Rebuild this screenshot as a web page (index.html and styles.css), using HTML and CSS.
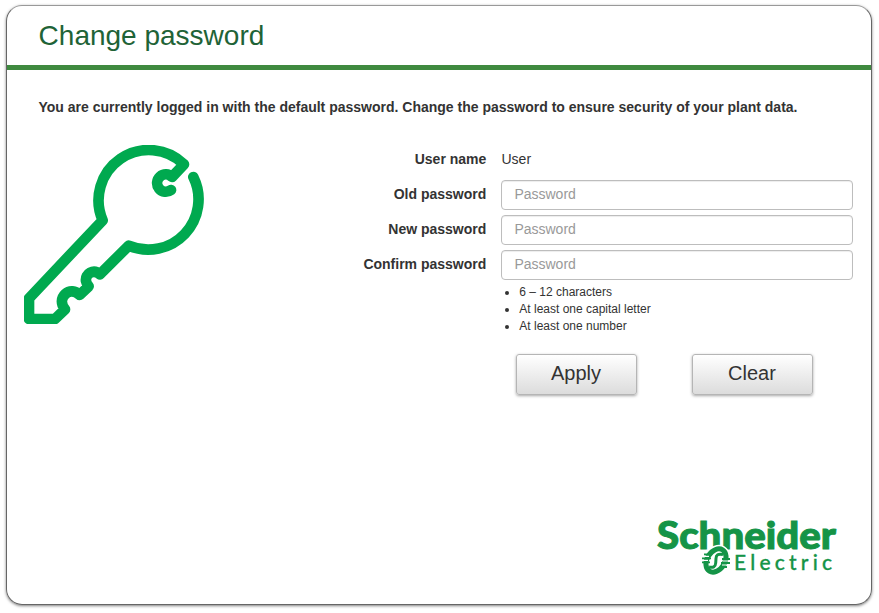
FILE: index.html
```html
<!DOCTYPE html>
<html lang="en">
<head>
<meta charset="utf-8">
<title>Change password</title>
<link rel="stylesheet" href="styles.css">
</head>
<body>
<main class="card">
  <header class="header"><h1>Change password</h1></header>
  <p class="notice">You are currently logged in with the default password. Change the password to ensure security of your plant data.</p>
  <div class="content">
    <svg class="key" viewBox="42 30 540 537" fill="none" stroke="#00a94f" stroke-width="32" stroke-linecap="round" stroke-linejoin="round" aria-hidden="true">
      <path d="M550 126A151 151 0 0 1 356 332L270 418C250 401 225 416 228 438Q230 448 236 454L209 480C196 467 179 465 166 477C153 489 152 507 165 523L135 552H57V490L278 256A151 151 0 0 1 522 88L486 126A26 26 0 1 0 483 165"/>
    </svg>
    <form class="form">
      <div class="row"><span class="label">User name</span><span class="value">User</span></div>
      <div class="row"><label class="label" for="old">Old password</label><input id="old" type="password" placeholder="Password"></div>
      <div class="row"><label class="label" for="new">New password</label><input id="new" type="password" placeholder="Password"></div>
      <div class="row"><label class="label" for="confirm">Confirm password</label><input id="confirm" type="password" placeholder="Password"></div>
      <ul class="rules">
        <li>6 – 12 characters</li>
        <li>At least one capital letter</li>
        <li>At least one number</li>
      </ul>
      <div class="actions"><button type="button">Apply</button><button type="button">Clear</button></div>
    </form>
  </div>
  <footer class="footer">
    <svg class="logo" viewBox="0 0 205 75" role="img" aria-label="Schneider Electric">
      <text class="brand" x="12" y="38.6" textLength="179" lengthAdjust="spacingAndGlyphs">Schneider</text>
      <text class="sub" x="89" y="59.5" textLength="98">Electric</text>
      <g transform="rotate(32 71 50.5)">
        <ellipse class="halo" cx="71" cy="50.5" rx="11.5" ry="15"/>
        <ellipse class="emblem" cx="71" cy="50.5" rx="11.5" ry="15"/>
        <ellipse class="inner" cx="71" cy="50.5" rx="6.3" ry="10"/>
      </g>
      <path class="cut" d="M57 46.4H64M56 50.4H63M78 51H86M77 55H85"/>
      <path class="bars" d="M59 44.4H67M57 48.4H66M57 52.4H65M77 49H85M76 53H85M75 57H82"/>
      <path class="ess" d="M78 44.5C73 43.5 71 45 71 48.5L70.7 53C70.5 57 68 58 64 57"/>
    </svg>
  </footer>
</main>
</body>
</html>
```
FILE: styles.css
```css
* { box-sizing: border-box; }
body {
  margin: 0;
  padding: 5px 7px 8px 6px;
  background: #fff;
  color: #333;
  font: 14px/20px "Liberation Sans", Arial, sans-serif;
}
.card {
  height: 600px;
  display: flex;
  flex-direction: column;
  border: 1px solid #666;
  border-top-color: #999;
  border-radius: 16px;
  box-shadow: 0 1px 3px rgba(0, 0, 0, .5);
}
.header {
  height: 64px;
  padding: 13px 31.6px 0;
  border-bottom: 5px solid #3f8a3f;
}
h1 {
  margin: 0;
  color: #1f6337;
  font-size: 28px;
  font-weight: 400;
  line-height: 34px;
}
.notice {
  margin: 27px 31.5px 0;
  font-weight: 700;
  white-space: nowrap;
}
.content {
  display: flex;
  padding: 28px 18px 0 17px;
}
.key {
  width: 180px;
  height: 179px;
  flex: none;
}
.form { flex: 1; }
.row {
  display: grid;
  grid-template-columns: 282.3px 352px;
  column-gap: 14.7px;
  height: 30px;
  margin-bottom: 5px;
  line-height: 28px;
}
.label {
  text-align: right;
  font-weight: 700;
}
.value { padding-left: .5px; }
input {
  width: 100%;
  height: 30px;
  padding: 3px 12px 5px 12.4px;
  border: 1px solid #bdbdbd;
  border-radius: 4px;
  background: #fff;
  color: #555;
  font: inherit;
  line-height: 20px;
  box-shadow: inset 0 1px 1px rgba(0, 0, 0, .075);
}
input::placeholder { color: #999; opacity: 1; }
.rules {
  margin: -1px 0 0 297px;
  padding-left: 18.3px;
  font-size: 12px;
  line-height: 17px;
}
.actions {
  display: flex;
  gap: 55px;
  margin: 19px 0 0 311.5px;
}
button {
  width: 121px;
  height: 41px;
  padding: 0 0 3px;
  border: 1px solid #b5b5b5;
  border-radius: 3px;
  background: linear-gradient(#fff, #dcdcdc);
  color: #333;
  font: 20px/24px "Liberation Sans", Arial, sans-serif;
  box-shadow: 0 1px 3px rgba(0, 0, 0, .35);
}
.footer {
  display: flex;
  justify-content: flex-end;
  margin-top: auto;
  padding: 0 21px 19px 0;
}
.logo {
  width: 205px;
  height: 75px;
}
.brand, .sub { fill: #159447; }
.brand {
  font: 900 37.5px Lato, sans-serif;
  stroke: #159447;
  stroke-width: 1px;
}
.sub {
  font: 500 21px Lato, sans-serif;
  stroke: #159447;
  stroke-width: .3px;
}
.halo {
  fill: #fff;
  stroke: #fff;
  stroke-width: 3px;
}
.emblem { fill: #159447; }
.inner { fill: #fff; }
.cut, .bars, .ess { fill: none; }
.cut { stroke: #fff; stroke-width: 1.2px; }
.bars { stroke: #159447; stroke-width: 1.8px; }
.ess { stroke: #159447; stroke-width: 3px; }
```
